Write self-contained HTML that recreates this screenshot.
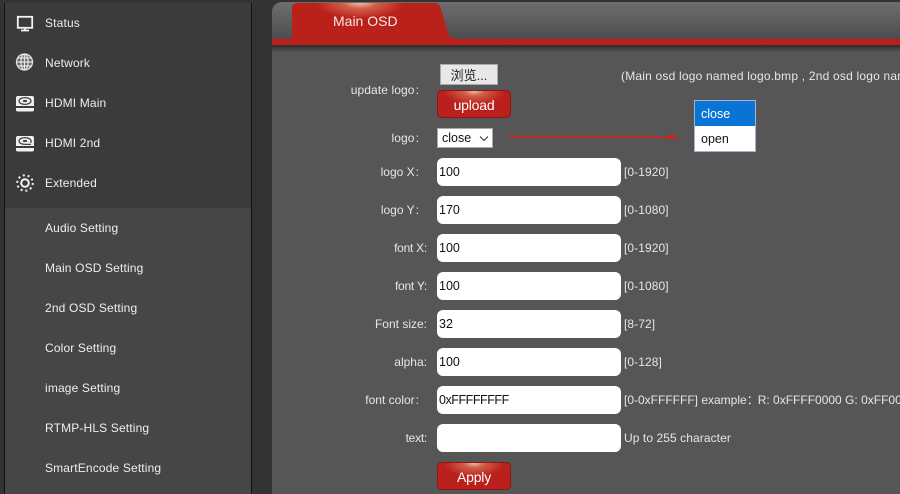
<!DOCTYPE html>
<html><head><meta charset="utf-8">
<style>
html,body{margin:0;padding:0;width:900px;height:494px;overflow:hidden;background:#333;font-family:"Liberation Sans","Noto Sans CJK SC",sans-serif;font-size:12px;color:#eee}
#wrap{position:absolute;left:0;top:0;width:900px;height:494px;overflow:hidden}
.a{position:absolute;white-space:nowrap}
#side{position:absolute;left:4px;top:3px;width:246px;height:491px;background:#3b3b3b;border-left:1px solid #111;border-right:1px solid #111}
#sub{position:absolute;left:5px;top:208px;width:246px;height:286px;background:#464646}
.m{position:absolute;left:45px;line-height:14px;color:#eee;letter-spacing:.15px;white-space:nowrap}
.ic{position:absolute;left:15px}
#main{position:absolute;left:272px;top:2px;width:628px;height:492px;background:#565656;border-top-left-radius:10px;overflow:hidden}
#head{position:absolute;left:0;top:0;width:628px;height:38px;background:linear-gradient(#6e6e6e,#4c4c4c)}
#line{position:absolute;left:0;top:37px;width:628px;height:6px;background:#bb1f1a}
#shadow{position:absolute;left:0;top:43px;width:628px;height:7px;background:linear-gradient(#2a2a2a,#565656)}
.l{position:absolute;text-align:right;line-height:14px;color:#e6e6e6;white-space:nowrap}
.n{letter-spacing:-.25px}
.w{letter-spacing:.1px}
.c{margin-left:1px}
.i{position:absolute;left:437px;width:182px;height:28px;background:#fff;border-radius:6px;color:#111;font-size:12.5px;line-height:29px;padding-left:2px}
.h{position:absolute;left:624px;line-height:14px;color:#e6e6e6;white-space:nowrap;letter-spacing:.08px}
.b{position:absolute;left:437px;width:72px;height:26px;border:1px solid #8e1512;border-radius:5px;background:radial-gradient(ellipse 30px 14px at 50% 0,#e8c4a6 0,#cf5f4a 35%,#ba211c 100%),#ba211c;color:#fff;text-align:center;font-size:14px;line-height:28px;letter-spacing:-.2px}
</style></head>
<body>
<div id="wrap">
<div id="side"></div>
<div id="sub"></div>

<svg class="ic" style="top:14px" width="20" height="18" viewBox="0 0 20 18" fill="none"><rect x="2.800" y="2.800" width="14.400" height="11" stroke="#f2f2f2" stroke-width="1.800"/><path d="M6 16.500h8M10 14v2" stroke="#f2f2f2" stroke-width="1.800"/></svg>
<svg class="ic" style="top:53px" width="20" height="18" viewBox="0 0 20 18" fill="none" stroke="#e4e4e4" stroke-width="1.300"><circle cx="9.500" cy="9" r="8" fill="#bbb" fill-opacity=".35"/><ellipse cx="9.500" cy="9" rx="3.600" ry="8"/><path d="M9.500 1v16M1.500 9h16M2.600 5h13.800M2.600 13h13.800"/></svg>
<svg class="ic" style="top:94px" width="20" height="18" viewBox="0 0 20 18"><path d="M3 2h14q2 0 2 2v8H1V4q0-2 2-2z" fill="#f0f0f0"/><ellipse cx="10" cy="7" rx="6" ry="3.400" fill="none" stroke="#444" stroke-width="1.300"/><ellipse cx="10" cy="7" rx="2.200" ry="1.100" fill="#444"/><path d="M1 14h18v2q0 1.500-2 1.500H3q-2 0-2-1.500z" fill="#f0f0f0"/></svg>
<svg class="ic" style="top:134px" width="20" height="18" viewBox="0 0 20 18"><path d="M3 2h14q2 0 2 2v8H1V4q0-2 2-2z" fill="#f0f0f0"/><path d="M16 9V7c0-1.900-2.700-3.400-6-3.400S4 5.100 4 7s2.700 3.400 6 3.400h6" fill="none" stroke="#444" stroke-width="1.300"/><ellipse cx="10" cy="7" rx="2.200" ry="1.100" fill="#444"/><path d="M1 14h18v2q0 1.500-2 1.500H3q-2 0-2-1.500z" fill="#f0f0f0"/></svg>
<svg class="ic" style="top:174px" width="20" height="18" viewBox="0 0 20 18" fill="none"><circle cx="10" cy="9" r="3.800" stroke="#f2f2f2" stroke-width="2"/><circle cx="10" cy="9" r="7.800" stroke="#f2f2f2" stroke-width="2" stroke-dasharray="2 2.900"/></svg>

<div class="m" style="top:16px">Status</div>
<div class="m" style="top:56px">Network</div>
<div class="m" style="top:96px">HDMI Main</div>
<div class="m" style="top:136px">HDMI 2nd</div>
<div class="m" style="top:176px">Extended</div>
<div class="m" style="top:221px">Audio Setting</div>
<div class="m" style="top:261px">Main OSD Setting</div>
<div class="m" style="top:301px">2nd OSD Setting</div>
<div class="m" style="top:341px">Color Setting</div>
<div class="m" style="top:381px">image Setting</div>
<div class="m" style="top:421px">RTMP-HLS Setting</div>
<div class="m" style="top:461px">SmartEncode Setting</div>

<div id="main">
<div id="head"></div>
<div id="line"></div>
<div id="shadow"></div>
<svg style="position:absolute;left:20px;top:0" width="176" height="40" viewBox="0 0 176 40"><defs><radialGradient id="g" cx="68" cy="0" r="44" gradientUnits="userSpaceOnUse" gradientTransform="scale(1 .38)"><stop offset="0" stop-color="#eed2b6"/><stop offset=".4" stop-color="#d0604a"/><stop offset="1" stop-color="#bb211b"/></radialGradient></defs><path d="M0 38V7Q0 1 6 1H142Q147 1 149 7L156 31Q158 37 166 37V40H0Z" fill="#bb211b"/><path d="M0 38V7Q0 1 6 1H142Q147 1 149 7L156 31Q158 37 166 37V40H0Z" fill="url(#g)"/></svg>
</div>
<div class="a" style="left:333px;top:13px;font-size:14px;line-height:16px;color:#f4e8e4">Main OSD</div>

<div class="l w" style="right:481px;top:83px">update logo<span class="c">:</span></div>
<div class="a" style="left:440px;top:64px;width:56px;height:19px;border:1px solid #aaa;background:#e8e8e8;color:#222;font-size:13px;line-height:21px;text-align:center">浏览...</div>
<div class="b" style="top:90px">upload</div>
<div class="a" style="left:621px;top:69px;width:279px;overflow:hidden;line-height:14px;color:#e6e6e6;letter-spacing:.2px">(Main osd logo named logo.bmp , 2nd osd logo named logo2.bmp)</div>

<div class="l w" style="right:481px;top:131px">logo<span class="c">:</span></div>
<div class="a" style="left:437px;top:128px;width:54px;height:18px;border:1px solid #aaa;background:#fff;color:#111;font-size:12.5px;line-height:19px"><span style="margin-left:4px">close</span>
<svg style="position:absolute;left:41px;top:6px" width="10" height="7" viewBox="0 0 10 7" fill="none"><path d="M1 1.500l4 4 4-4" stroke="#333" stroke-width="1.100"/></svg></div>
<div class="a" style="left:508px;top:136px;width:165px;height:2px;background:#c02a26"></div>
<svg class="a" style="left:669px;top:132px" width="12" height="10" viewBox="0 0 12 10"><path d="M0 2l10 3-10 3z" fill="#d01f1a"/></svg>

<div class="a" style="left:694px;top:100px;width:60px;height:50px;border:1px solid #9fb6cf;background:#fff;color:#111;font-size:12.5px">
<div style="height:25px;line-height:26px;background:#0a74d6;color:#fff;padding-left:6px">close</div>
<div style="height:25px;line-height:26px;padding-left:6px">open</div></div>

<div class="l" style="right:481px;top:165px">logo X<span class="c">:</span></div>
<div class="i" style="top:158px">100</div><div class="h" style="top:165px">[0-1920]</div>
<div class="l" style="right:481px;top:203px">logo Y<span class="c">:</span></div>
<div class="i" style="top:196px">170</div><div class="h" style="top:203px">[0-1080]</div>
<div class="l n" style="right:473px;top:241px">font X:</div>
<div class="i" style="top:234px">100</div><div class="h" style="top:241px">[0-1920]</div>
<div class="l n" style="right:473px;top:279px">font Y:</div>
<div class="i" style="top:272px">100</div><div class="h" style="top:279px">[0-1080]</div>
<div class="l" style="right:473px;top:317px">Font size:</div>
<div class="i" style="top:310px">32</div><div class="h" style="top:317px">[8-72]</div>
<div class="l" style="right:473px;top:355px">alpha:</div>
<div class="i" style="top:348px">100</div><div class="h" style="top:355px">[0-128]</div>
<div class="l" style="right:481px;top:393px">font color<span class="c">:</span></div>
<div class="i" style="top:386px;letter-spacing:-.45px">0xFFFFFFFF</div><div class="h" style="top:393px;width:276px;overflow:hidden;letter-spacing:0">[0-0xFFFFFF] example<span style="margin-right:-1px">：</span>R: 0xFFFF0000 G: 0xFF00FF00 B: 0xFF0000FF</div>
<div class="l n" style="right:473px;top:431px">text:</div>
<div class="i" style="top:424px"></div><div class="h" style="top:431px">Up to 255 character</div>
<div class="b" style="top:462px">Apply</div>
</div>
</body></html>
